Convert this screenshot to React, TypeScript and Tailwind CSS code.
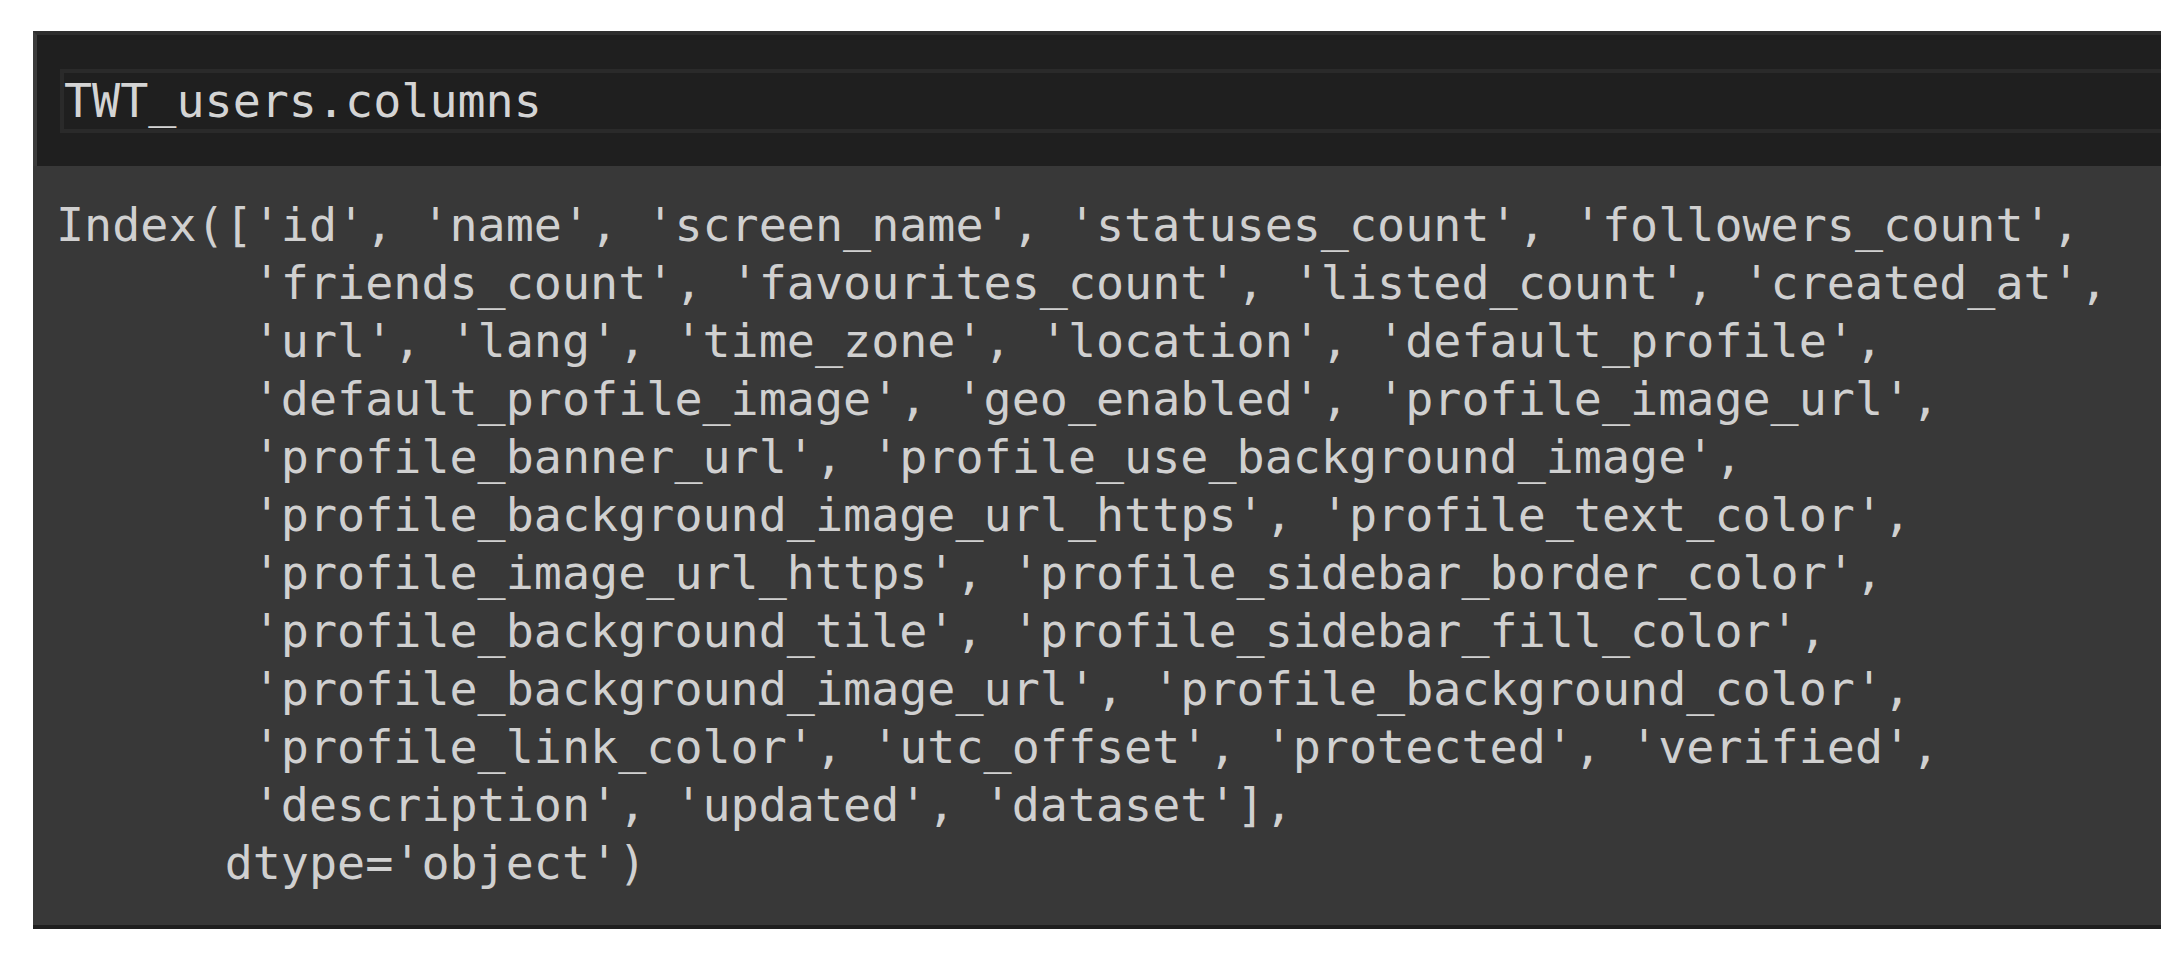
import React from "react";

const output = [
  "Index(['id', 'name', 'screen_name', 'statuses_count', 'followers_count',",
  "       'friends_count', 'favourites_count', 'listed_count', 'created_at',",
  "       'url', 'lang', 'time_zone', 'location', 'default_profile',",
  "       'default_profile_image', 'geo_enabled', 'profile_image_url',",
  "       'profile_banner_url', 'profile_use_background_image',",
  "       'profile_background_image_url_https', 'profile_text_color',",
  "       'profile_image_url_https', 'profile_sidebar_border_color',",
  "       'profile_background_tile', 'profile_sidebar_fill_color',",
  "       'profile_background_image_url', 'profile_background_color',",
  "       'profile_link_color', 'utc_offset', 'protected', 'verified',",
  "       'description', 'updated', 'dataset'],",
  "      dtype='object')",
];

const App = () => {
  return (
    <div className="min-h-screen bg-white pl-[33px] pt-[31px]">
      <div className="w-[2128px] font-['DejaVu_Sans_Mono',monospace] text-[46.7px] text-[#d0d0d0]">
        {/* input cell */}
        <div className="border-t-4 border-l-4 border-t-[#2e2e2e] border-l-[#3b3b3b] bg-[#1f1f1f] pl-[23px] pt-[34px] pb-[33px]">
          <div className="border-y-4 border-l-4 border-[#2a2a2a] bg-[#1f1f1f] leading-[56px] whitespace-pre text-[#d4d4d4]">
            TWT_users.columns
          </div>
        </div>
        {/* output */}
        <div className="bg-[#383838] pl-[23px] pt-[30px] pb-[33px] border-b-4 border-b-[#1f1f1f]">
          {output.map((line, i) => (
            <div key={i} className="leading-[58px] whitespace-pre">
              {line}
            </div>
          ))}
        </div>
      </div>
    </div>
  );
};

export default App;
